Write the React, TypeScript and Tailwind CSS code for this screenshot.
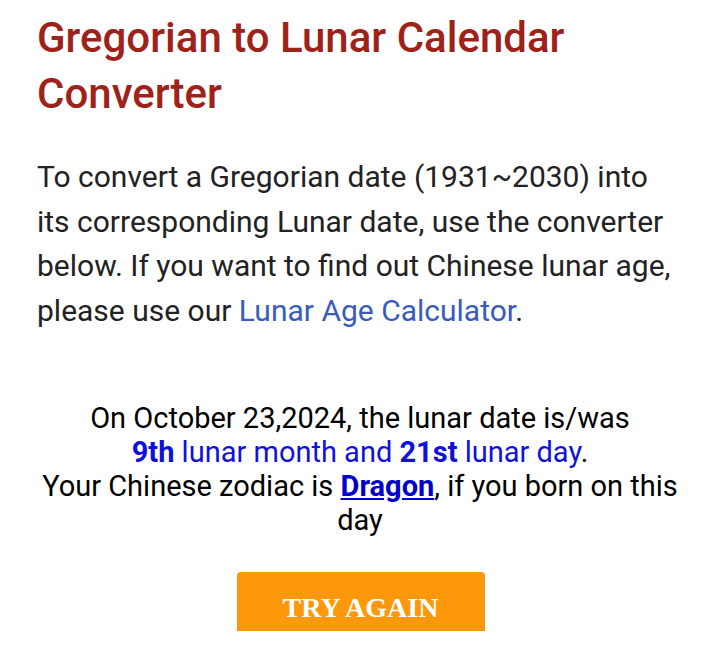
export default function App() {
  return (
    <div className="min-h-[664px] bg-white font-['Roboto',sans-serif]">
      <div className="px-[37px] pt-[10px]">
        <h1 className="text-[42px] leading-[56px] font-medium text-[#9e2219]">
          Gregorian to Lunar Calendar Converter
        </h1>
        <p className="mt-[33px] text-[30px] leading-[44.5px] text-[#222222]">
          To convert a Gregorian date (1931~2030) into its corresponding Lunar date, use the converter
          below. If you want to find out Chinese lunar age, please use our{' '}
          <a href="#" className="text-[#3a5bbb]">Lunar Age Calculator</a>.
        </p>
      </div>

      <div className="mt-[68px] px-[37px] text-center text-[29px] leading-[34px] text-black">
        <p>On October 23,2024, the lunar date is/was</p>
        <p>
          <span className="text-[#1010dd]">
            <b>9th</b> lunar month and <b>21st</b> lunar day
          </span>
          .
        </p>
        <p>
          Your Chinese zodiac is{' '}
          <a href="#" className="font-bold text-[#0000cc] underline">Dragon</a>, if you born on this day
        </p>
      </div>

      <div className="mt-[35px] flex justify-center">
        <button
          type="button"
          className="ml-[1px] flex h-[59px] w-[248px] items-start justify-center rounded-t-[4px] bg-[#fd980b] pt-[20px] font-['Liberation_Serif',serif] text-[28px] leading-[32px] font-bold text-white"
        >
          TRY AGAIN
        </button>
      </div>
    </div>
  );
}
